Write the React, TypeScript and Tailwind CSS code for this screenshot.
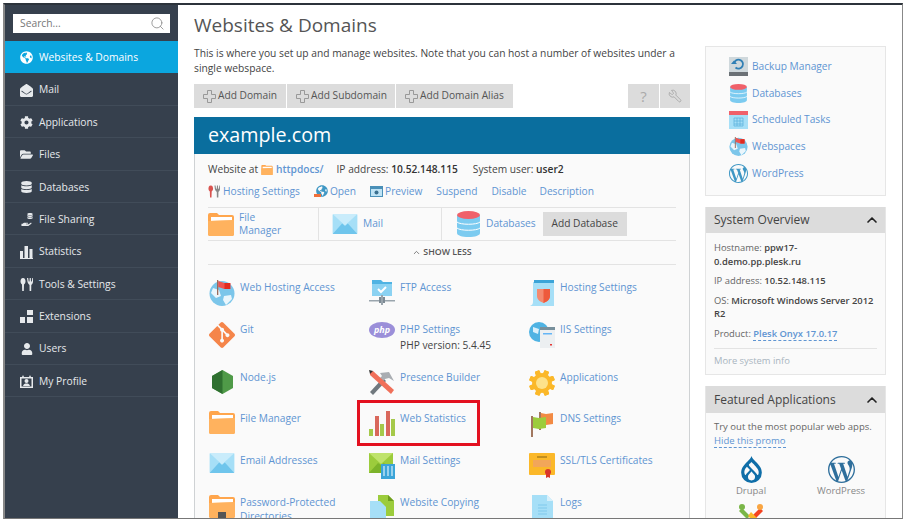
import React from 'react';
import { FaGlobeAmericas, FaEnvelopeOpen, FaDatabase, FaUser, FaCog, FaFolderOpen, FaHandHolding } from 'react-icons/fa';
import { SiGit, SiWordpress, SiDrupal } from 'react-icons/si';
import { Search, ChevronUp, Wrench } from 'lucide-react';

const LINK = 'text-[#5f95d2]';

function Folder({ className = 'w-[26px] h-[23px]', lock = false }: { className?: string; lock?: boolean }) {
  return (
    <svg viewBox="0 0 26 23" className={className}>
      <path d="M0 2a2 2 0 0 1 2-2h7l2 2h13a2 2 0 0 1 2 2v17a2 2 0 0 1-2 2H2a2 2 0 0 1-2-2z" fill="#ffa64d" />
      <path d="M3 4h21v3.500L3 8z" fill="#fff" />
      <path d="M0 8l26-1v14a2 2 0 0 1-2 2H2a2 2 0 0 1-2-2z" fill="#ffb25e" />
      {lock && <rect x="9" y="17" width="8" height="6" fill="#555" />}
    </svg>
  );
}

function Envelope({ className = 'w-[26px] h-[20px]' }: { className?: string }) {
  return (
    <svg viewBox="0 0 26 21" className={className}>
      <rect width="26" height="21" rx="1" fill="#a6dff7" />
      <path d="M0 0l13 12L26 0z" fill="#c9ecfb" />
      <path d="M0 21l10-11 3 2.500 3-2.500 10 11z" fill="#6fc5ec" />
    </svg>
  );
}

function Db({ className = 'w-[23px] h-[26px]' }: { className?: string }) {
  return (
    <svg viewBox="0 0 23 26" className={className}>
      <path d="M0 4h23v18c0 2.500-5 4-11.500 4S0 24.500 0 22z" fill="#7ccbf0" />
      <path d="M0 11c3 3 20 3 23 0M0 17c3 3 20 3 23 0" stroke="#fff" strokeWidth="1" fill="none" />
      <ellipse cx="11.500" cy="4" rx="11.500" ry="4" fill="#f0616a" />
    </svg>
  );
}

function GlobeFlag({ className = 'w-[26px] h-[26px]' }: { className?: string }) {
  return (
    <svg viewBox="0 0 26 26" className={className}>
      <circle cx="13" cy="13.500" r="12.500" fill="#7cc6ea" />
      <path d="M4 8l6 2 2 6-5 2-5-5zM15 16l7-1 1 4-6 6-3-5z" fill="#eaf6fc" />
      <path d="M8 0h1.300v15H8z" fill="#9a6b5a" />
      <path d="M9.300 1l6 2h6v6h-6l-6-2z" fill="#ef5350" />
      <path d="M15.500 3h5.800v6h-5.800z" fill="#e02b20" />
    </svg>
  );
}

function Hammer() {
  return (
    <svg viewBox="0 0 26 26" className="w-[26px] h-[26px]">
      <path d="M1 22l13-14 3 3L4 25z" fill="#70787e" />
      <path d="M11 3l9-1 5 9-5-3-4 1-2 2-3-3 2-2z" fill="#a9adb2" />
      <path d="M1 2l3-1 21 19-3 4L1 5z" fill="#f0705a" />
      <path d="M0 0l4 1-3 3z" fill="#333" />
    </svg>
  );
}

function Chart() {
  return (
    <svg viewBox="0 0 26 25" className="w-[26px] h-[25px]">
      <rect x="0" y="18" width="4" height="7" fill="#a5c94a" />
      <rect x="6" y="5" width="4" height="20" fill="#d9685c" />
      <rect x="11" y="13" width="4" height="12" fill="#a5c94a" />
      <rect x="17" y="0" width="4" height="25" fill="#d9685c" />
      <rect x="22" y="8" width="4" height="17" fill="#a5c94a" />
    </svg>
  );
}

function Ftp() {
  return (
    <svg viewBox="0 0 26 26" className="w-[26px] h-[26px]">
      <path d="M3 0h9l2 2h9v14H3z" fill="#4fb3e3" />
      <rect x="3" y="4" width="20" height="12" fill="#8bd2f2" />
      <path d="M9 9l3 3 5-5" stroke="#fff" strokeWidth="2" fill="none" />
      <rect x="0" y="20" width="26" height="1.500" fill="#9aa5ad" />
      <rect x="10" y="17" width="6" height="6" fill="#7d8a94" />
      <rect x="12" y="15" width="2" height="10" fill="#9aa5ad" />
    </svg>
  );
}

function Scroll() {
  return (
    <svg viewBox="0 0 24 26" className="w-[24px] h-[26px]">
      <path d="M3 2h21v24H0c2-1 3-2 3-4z" fill="#a6dff7" />
      <rect x="4" y="0" width="20" height="3" fill="#3ba4d8" />
      <path d="M7 9h13v7c0 4-4 6-6.500 7C11 22 7 20 7 16z" fill="#f48a70" />
      <path d="M13.500 9H20v7c0 4-4 6-6.500 7z" fill="#ee5a3c" />
    </svg>
  );
}

function Iis() {
  return (
    <svg viewBox="0 0 26 26" className="w-[26px] h-[26px]">
      <circle cx="10" cy="10" r="10" fill="#4fb3e3" />
      <path d="M4 5l6 2-1 5-5-2zM12 13l5 0-3 6z" fill="#d9f0fb" />
      <rect x="11" y="5" width="15" height="21" fill="#eceff1" />
      <rect x="11" y="5" width="15" height="3" fill="#78909c" />
      <rect x="14" y="11" width="9" height="1.500" fill="#64b5f6" />
      <rect x="21" y="22" width="2" height="1.500" fill="#e53935" />
    </svg>
  );
}

function Gear({ className = 'w-[26px] h-[26px]' }: { className?: string }) {
  return (
    <svg viewBox="0 0 26 26" className={className}>
      <g fill="#fbb829">
        {[0, 45, 90, 135, 180, 225, 270, 315].map(a => (
          <rect key={a} x="10.500" y="0" width="5" height="26" rx="1" transform={`rotate(${a + 22} 13 13)`} />
        ))}
        <circle cx="13" cy="13" r="10" />
      </g>
      <circle cx="13" cy="13" r="6" fill="#fde28b" />
    </svg>
  );
}

function Flags() {
  return (
    <svg viewBox="0 0 24 26" className="w-[24px] h-[26px]">
      <rect x="1" y="5" width="2" height="21" fill="#a1775f" />
      <rect x="9" y="1" width="2" height="18" fill="#a1775f" />
      <path d="M11 2l5 1 7-1v11l-7 1-5-1z" fill="#f28a43" />
      <path d="M3 6l6 1 7-1v11l-7 1-6-1z" fill="#9ccc3c" />
    </svg>
  );
}

function Cert() {
  return (
    <svg viewBox="0 0 26 25" className="w-[26px] h-[25px]">
      <rect width="26" height="22" rx="1" fill="#fbb829" />
      <rect x="4" y="7" width="18" height="7" fill="#f2a65a" />
      <rect x="8" y="3.500" width="10" height="1" fill="#8a6414" />
      <circle cx="19" cy="19" r="3" fill="#d9352a" />
      <path d="M17 21v4l2-1 2 1v-4z" fill="#d9352a" />
    </svg>
  );
}

function MailSettings() {
  return (
    <svg viewBox="0 0 26 26" className="w-[26px] h-[26px]">
      <rect width="24" height="20" fill="#9ccc3c" />
      <path d="M0 0l12 11L24 0z" fill="#bfe36b" />
      <path d="M0 20l9-10 3 2 3-2 9 10z" fill="#7cb32a" />
      <rect x="12" y="11" width="14" height="15" fill="#3ba4d8" />
      <path d="M15 13v10M19 13v10M23 13v10" stroke="#d9f0fb" strokeWidth="1.200" />
    </svg>
  );
}

function Copy() {
  return (
    <svg viewBox="0 0 24 26" className="w-[24px] h-[26px]">
      <path d="M8 0h10l6 6v15H8z" fill="#9ccc3c" />
      <path d="M18 0l6 6h-6z" fill="#6e9e1e" />
      <path d="M0 6h10l6 6v14H0z" fill="#a6dff7" />
    </svg>
  );
}

function Logs() {
  return (
    <svg viewBox="0 0 21 26" className="w-[21px] h-[26px]">
      <path d="M0 0h15l6 6v20H0z" fill="#a6dff7" />
      <path d="M15 0l6 6h-6z" fill="#d7f0fb" />
      <path d="M6 10h9M6 13h9M6 16h9M6 19h9" stroke="#7fc9ec" strokeWidth="1" />
    </svg>
  );
}

function Backup() {
  return (
    <svg viewBox="0 0 19 19" className="w-[19px] h-[19px]">
      <rect width="19" height="15" fill="#cfd8dc" />
      <rect y="15" width="19" height="4" fill="#6b7176" />
      <path d="M5 7a4.500 4.500 0 1 1 1.500 3.500" stroke="#2f7fb5" strokeWidth="1.800" fill="none" />
      <path d="M2 7h6L5 3.500z" fill="#2f7fb5" />
    </svg>
  );
}

function Calendar() {
  return (
    <svg viewBox="0 0 19 18" className="w-[19px] h-[18px]">
      <rect width="19" height="18" fill="#a6dff7" />
      <rect width="19" height="4" fill="#f0616a" />
      <path d="M5 7h9v8H5zM8 7v8M11 7v8M5 10h9M5 13h9" stroke="#5fb4de" strokeWidth=".8" fill="none" />
    </svg>
  );
}

function Joomla() {
  return (
    <svg viewBox="0 0 24 18" className="w-[24px] h-[18px]">
      <path d="M3 4l8 8-3 3-8-8z" fill="#7ab648" />
      <path d="M21 4l-8 8 3 3 8-8z" fill="#f44321" />
      <path d="M12 8l6 6-3 4-6-6z" fill="#fbb829" />
      <circle cx="3" cy="3" r="3" fill="#7ab648" />
      <circle cx="21" cy="3" r="3" fill="#f9a541" />
    </svg>
  );
}

function ForkIcon({ spoon = 'currentColor', fork = 'currentColor', className = 'w-[13px] h-[13px]' }: { spoon?: string; fork?: string; className?: string }) {
  return (
    <svg viewBox="0 0 13 13" className={className}>
      <path d="M3 0C1 0 .5 2 .5 3.500S1.500 6 2 6.500L2.200 13h1.600L4 6.500C4.500 6 5.500 5 5.500 3.500S5 0 3 0z" fill={spoon} />
      <path d="M7 0l.5 4C8 5.500 9 6.500 9.500 7l.1 6h1.600l.1-6c.5-.5 1.500-1.500 1.700-3l.5-4h-1.200l-.5 3.500h-.8L10.800 0h-1.100l-.2 3.500h-.8L8.200 0z" fill={fork} />
    </svg>
  );
}

function Bars() {
  return (
    <svg viewBox="0 0 13 13" className="w-[13px] h-[13px]" fill="currentColor">
      <rect x="0" y="5" width="3" height="7" />
      <rect x="4.500" y="0" width="3.500" height="12" />
      <rect x="9.500" y="3" width="3" height="9" />
      <rect x="0" y="12" width="13" height="1" />
    </svg>
  );
}

function Squares() {
  return (
    <svg viewBox="0 0 13 13" className="w-[13px] h-[13px]" fill="currentColor">
      <rect x="7" y="0" width="6" height="5" />
      <rect x="0" y="7" width="5" height="6" />
      <rect x="7" y="7" width="6" height="6" />
    </svg>
  );
}

function Profile() {
  return (
    <svg viewBox="0 0 13 13" className="w-[13px] h-[13px]" fill="currentColor">
      <path d="M0 2h2l1-2 1 2h5l1-2 1 2h2v11H0zM1.500 3.500v8h10v-8z" fillRule="evenodd" />
      <circle cx="6.500" cy="6" r="2" />
      <path d="M3 11c.5-2 2-2.500 3.500-2.500S9.500 9 10 11z" />
    </svg>
  );
}

function Share() {
  return (
    <span className="relative w-[13px] h-[13px] flex">
      <FaHandHolding className="w-[13px] h-[9px] mt-auto" />
      <FaDatabase className="absolute right-0 top-0 w-[6px] h-[6px]" />
    </span>
  );
}

const navItems = [
  { label: 'Mail', icon: <FaEnvelopeOpen className="w-[13px] h-[13px]" /> },
  { label: 'Applications', icon: <FaCog className="w-[13px] h-[13px]" /> },
  { label: 'Files', icon: <FaFolderOpen className="w-[13px] h-[13px]" /> },
  { label: 'Databases', icon: <FaDatabase className="w-[11px] h-[12px]" /> },
  { label: 'File Sharing', icon: <Share /> },
  { label: 'Statistics', icon: <Bars /> },
  { label: 'Tools & Settings', icon: <ForkIcon /> },
  { label: 'Extensions', icon: <Squares /> },
  { label: 'Users', icon: <FaUser className="w-[12px] h-[12px]" /> },
  { label: 'My Profile', icon: <Profile /> },
];

const tools = [
  { label: 'Web Hosting Access', icon: <GlobeFlag />, h: 'h-[42px]' },
  { label: 'FTP Access', icon: <Ftp />, h: 'h-[42px]' },
  { label: 'Hosting Settings', icon: <Scroll />, h: 'h-[42px]' },
  { label: 'Git', icon: <SiGit className="w-[26px] h-[26px] text-[#f5854a]" />, h: 'h-[48px]' },
  { label: 'PHP Settings', sub: 'PHP version: 5.4.45', h: 'h-[48px]', icon: (
    <svg viewBox="0 0 26 16" className="w-[26px] h-[16px]">
      <ellipse cx="13" cy="8" rx="13" ry="8" fill="#9b8fd9" />
      <text x="13" y="11" textAnchor="middle" fontSize="9" fontWeight="700" fontStyle="italic" fill="#fff" fontFamily="Open Sans">php</text>
    </svg>
  ) },
  { label: 'IIS Settings', icon: <Iis />, h: 'h-[48px]' },
  { label: 'Node.js', h: 'h-[41px]', icon: (
    <svg viewBox="0 0 21 24" className="w-[21px] h-[24px]">
      <path d="M10.500 0L21 6v12l-10.500 6L0 18V6z" fill="#4f9a48" />
      <path d="M10.500 0L0 6v12l10.500 6z" fill="#2f7030" />
    </svg>
  ) },
  { label: 'Presence Builder', icon: <Hammer />, h: 'h-[41px]' },
  { label: 'Applications', icon: <Gear />, h: 'h-[41px]' },
  { label: 'File Manager', icon: <Folder />, h: 'h-[42px]' },
  { label: 'Web Statistics', icon: <Chart />, marked: true, h: 'h-[42px]' },
  { label: 'DNS Settings', icon: <Flags />, h: 'h-[42px]' },
  { label: 'Email Addresses', icon: <Envelope />, h: 'h-[42px]' },
  { label: 'Mail Settings', icon: <MailSettings />, h: 'h-[42px]' },
  { label: 'SSL/TLS Certificates', icon: <Cert />, h: 'h-[42px]' },
  { label: 'Password-Protected Directories', icon: <Folder lock />, h: 'h-[42px]' },
  { label: 'Website Copying', icon: <Copy />, h: 'h-[42px]' },
  { label: 'Logs', icon: <Logs />, h: 'h-[42px]' },
];

const sideLinks = [
  { label: 'Backup Manager', icon: <Backup /> },
  { label: 'Databases', icon: <Db className="w-[17px] h-[19px]" /> },
  { label: 'Scheduled Tasks', icon: <Calendar /> },
  { label: 'Webspaces', icon: <GlobeFlag className="w-[19px] h-[19px]" /> },
  { label: 'WordPress', icon: <SiWordpress className="w-[19px] h-[19px] text-[#3f97c4]" /> },
];

const addButtons = [
  { label: 'Add Domain', w: 'w-[92px]' },
  { label: 'Add Subdomain', w: 'w-[108px]' },
  { label: 'Add Domain Alias', w: 'w-[117px]' },
];

function Plus() {
  return (
    <svg viewBox="0 0 13 13" className="w-[13px] h-[13px] text-[#999]">
      <path d="M4.500.5h4v4h4v4h-4v4h-4v-4h-4v-4h4z" fill="none" stroke="currentColor" />
    </svg>
  );
}

function Sidebar() {
  return (
    <aside className="w-[173px] shrink-0 bg-[#36404d] text-[#e6e9ec] text-[10.300px]">
      <div className="h-[36px] px-[8px] pt-[9px]">
        <div className="h-[19px] bg-white flex items-center justify-between pl-[7px] pr-[5px] text-[#777]">
          <span>Search...</span>
          <Search className="w-[15px] h-[15px] text-[#888]" strokeWidth={1.300} />
        </div>
      </div>
      <div className="h-[32.400px] pt-px bg-[#0ba6df] text-white flex items-center gap-[6px] pl-[15px]">
        <FaGlobeAmericas className="w-[13px] h-[13px]" />
        <span>Websites &amp; Domains</span>
      </div>
      {navItems.map(item => (
        <div key={item.label} className="h-[32.400px] pt-[2px] border-b border-[#414c59] flex items-center gap-[6px] pl-[15px]">
          <span className="w-[13px] flex justify-center">{item.icon}</span>
          <span>{item.label}</span>
        </div>
      ))}
    </aside>
  );
}

function DomainPanel() {
  return (
    <section className="mt-[9px]">
      <div className="h-[37px] pb-[2px] bg-[#0a6e9e] text-white text-[19.700px] pl-[14px] flex items-center">example.com</div>
      <div className="border border-t-0 border-[#cfd2d4] bg-[#fafafa] px-[13px] pb-[20px]">
        <div className="h-[30px] pt-[2px] flex items-center text-[#444]">
          <span>Website at</span>
          <Folder className="w-[12px] h-[10px] mx-[3px]" />
          <span className={LINK + ' font-semibold'}>httpdocs/</span>
          <span className="ml-[13px]">IP address: <b className="font-semibold text-[#333]">10.52.148.115</b></span>
          <span className="ml-[15px]">System user: <b className="font-semibold text-[#333]">user2</b></span>
        </div>
        <div className={'h-[15px] flex items-center ' + LINK}>
          <ForkIcon spoon="#d9534f" fork="#888" className="w-[12px] h-[13px] mr-[3px]" />
          <span>Hosting Settings</span>
          <span className="relative ml-[14px] mr-[2px] w-[14px] h-[13px]">
            <FaGlobeAmericas className="absolute right-0 top-0 w-[12px] h-[12px] text-[#3f97c4]" />
            <span className="absolute left-0 bottom-[1px] w-[7px] h-[3px] bg-[#f0703a]" />
          </span>
          <span>Open</span>
          <svg viewBox="0 0 13 11" className="w-[13px] h-[11px] ml-[14px] mr-[2px]">
            <rect width="13" height="11" fill="#4a90b8" />
            <rect x="1" y="3" width="11" height="7" fill="#bfe3f5" />
            <circle cx="6.500" cy="6.500" r="2" fill="#3a6f8f" />
          </svg>
          <span>Preview</span>
          <span className="ml-[14px]">Suspend</span>
          <span className="ml-[14px]">Disable</span>
          <span className="ml-[13px]">Description</span>
        </div>
        <div className="mt-[8px] h-[34px] border-y border-[#e3e3e3] flex items-center">
          <div className="w-[111px] h-full flex items-center gap-[5px] border-r border-[#e3e3e3]">
            <Folder />
            <span className={LINK + ' leading-[13px]'}>File<br />Manager</span>
          </div>
          <div className="w-[123px] h-full flex items-center gap-[5px] border-r border-[#e3e3e3] pl-[13px]">
            <Envelope />
            <span className={LINK}>Mail</span>
          </div>
          <div className="flex items-center pl-[15px]">
            <Db />
            <span className={LINK + ' ml-[6px]'}>Databases</span>
            <span className="ml-[7px] h-[24px] w-[84px] bg-[#dcdcdc] text-[#444] flex items-center justify-center">Add Database</span>
          </div>
        </div>
        <div className="h-[24px] border-b border-[#e3e3e3] flex items-center justify-center gap-[2px] text-[8.800px] font-semibold text-[#555]">
          <ChevronUp className="w-[9px] h-[9px]" />
          <span>SHOW LESS</span>
        </div>
        <div className="mt-[15px] grid grid-cols-[160px_160px_160px] pl-[1px]">
          {tools.map(tool => (
            <div key={tool.label} className={'relative flex gap-[5px] ' + tool.h}>
              <span className="w-[26px] shrink-0 flex justify-center items-start">{tool.icon}</span>
              <div className="leading-[14px]">
                <div className={LINK}>{tool.label}</div>
                {tool.sub && <div className="text-[#444] mt-[2px]">{tool.sub}</div>}
              </div>
              {tool.marked && <div className="absolute left-[-12px] top-[-11px] w-[123px] h-[46px] border-[3px] border-[#e3101f]" />}
            </div>
          ))}
        </div>
      </div>
    </section>
  );
}

function MainColumn() {
  return (
    <div className="w-[496px] shrink-0">
      <h1 className="text-[19px] leading-[27px] pt-[7px] text-[#555]">Websites &amp; Domains</h1>
      <p className="mt-[7px] leading-[14.500px] text-[10.250px] text-[#444] w-[490px]">
        This is where you set up and manage websites. Note that you can host a number of websites under a single webspace.
      </p>
      <div className="mt-[9px] flex text-[#555]">
        {addButtons.map(btn => (
          <div key={btn.label} className={'h-[24px] mr-[1px] pl-[9px] bg-[#dcdcdc] flex items-center gap-[2px] ' + btn.w}>
            <Plus />
            <span>{btn.label}</span>
          </div>
        ))}
        <div className="ml-auto flex gap-[1px]">
          <div className="w-[31px] h-[24px] bg-[#dcdcdc] flex items-center justify-center text-[#aaa] text-[15px]">?</div>
          <div className="w-[30px] h-[24px] bg-[#dcdcdc] flex items-center justify-center text-[#999]">
            <Wrench className="w-[14px] h-[14px] -scale-x-100" strokeWidth={1.200} />
          </div>
        </div>
      </div>
      <DomainPanel />
    </div>
  );
}

function SideHead({ title }: { title: string }) {
  return (
    <div className="h-[26px] bg-[#dcdcdc] flex items-center justify-between pl-[8px] pr-[5px] text-[12px] text-[#444]">
      <span>{title}</span>
      <ChevronUp className="w-[16px] h-[16px] text-[#222]" strokeWidth={2.500} />
    </div>
  );
}

function RightColumn() {
  return (
    <div className="ml-[15px] w-[181px] shrink-0 pt-[41px]">
      <div className="h-[150px] border border-[#e6e6e6] bg-[#fafafa] pl-[23px] pt-[6px] flex flex-col">
        {sideLinks.map(link => (
          <div key={link.label} className="h-[26.800px] flex items-center gap-[4px]">
            <span className="w-[19px] flex justify-center">{link.icon}</span>
            <span className={LINK}>{link.label}</span>
          </div>
        ))}
      </div>
      <div className="mt-[11px] border border-[#e6e6e6] border-t-0 bg-[#fafafa]">
        <SideHead title="System Overview" />
        <div className="px-[8px] pt-[8px] pb-[6px] text-[9.400px] leading-[13.500px] text-[#666]">
          <p>Hostname: <b className="font-semibold text-[#444]">ppw17-0.demo.pp.plesk.ru</b></p>
          <p className="mt-[6px]">IP address: <b className="font-semibold text-[#444]">10.52.148.115</b></p>
          <p className="mt-[6px]">OS: <b className="font-semibold text-[#444]">Microsoft Windows Server 2012 R2</b></p>
          <p className="mt-[6px]">Product: <span className={LINK + ' font-semibold border-b border-dashed border-[#5f95d2]'}>Plesk Onyx 17.0.17</span></p>
          <p className="mt-[8px] pt-[5px] border-t border-[#e3e3e3] text-[#a9b5c0]">More system info</p>
        </div>
      </div>
      <div className="mt-[11px] border border-[#e6e6e6] border-t-0 bg-[#fafafa]">
        <div className="pt-px bg-[#dcdcdc]"><SideHead title="Featured Applications" /></div>
        <div className="pl-[8px] pt-[7px] text-[9.500px] leading-[14px] text-[#666]">
          <p>Try out the most popular web apps.</p>
          <span className={LINK + ' border-b border-dashed border-[#5f95d2]'}>Hide this promo</span>
          <div className="mt-[8px] grid grid-cols-[74px_90px] gap-x-[8px] text-center text-[#888]">
            <div className="flex flex-col items-center gap-px">
              <SiDrupal className="w-[27px] h-[27px] text-[#0f6ea8]" />
              <span>Drupal</span>
            </div>
            <div className="flex flex-col items-center gap-px">
              <SiWordpress className="w-[27px] h-[27px] text-[#2f6f9c]" />
              <span>WordPress</span>
            </div>
            <div className="flex justify-center pt-[6px]"><Joomla /></div>
          </div>
        </div>
      </div>
    </div>
  );
}

export default function App() {
  return (
    <div className="w-[907px] h-[523px] bg-white pt-[3px] pl-[3px] font-['Open_Sans',sans-serif] text-[10.200px] overflow-hidden">
      <div className="w-[900px] h-[516px] border-t-2 border-t-[#2c333b] border-l-2 border-r border-b border-l-[#888] border-r-[#888] border-b-[#777] flex overflow-hidden bg-white">
        <Sidebar />
        <main className="flex-1 pl-[16px] flex overflow-hidden">
          <MainColumn />
          <RightColumn />
        </main>
      </div>
    </div>
  );
}
